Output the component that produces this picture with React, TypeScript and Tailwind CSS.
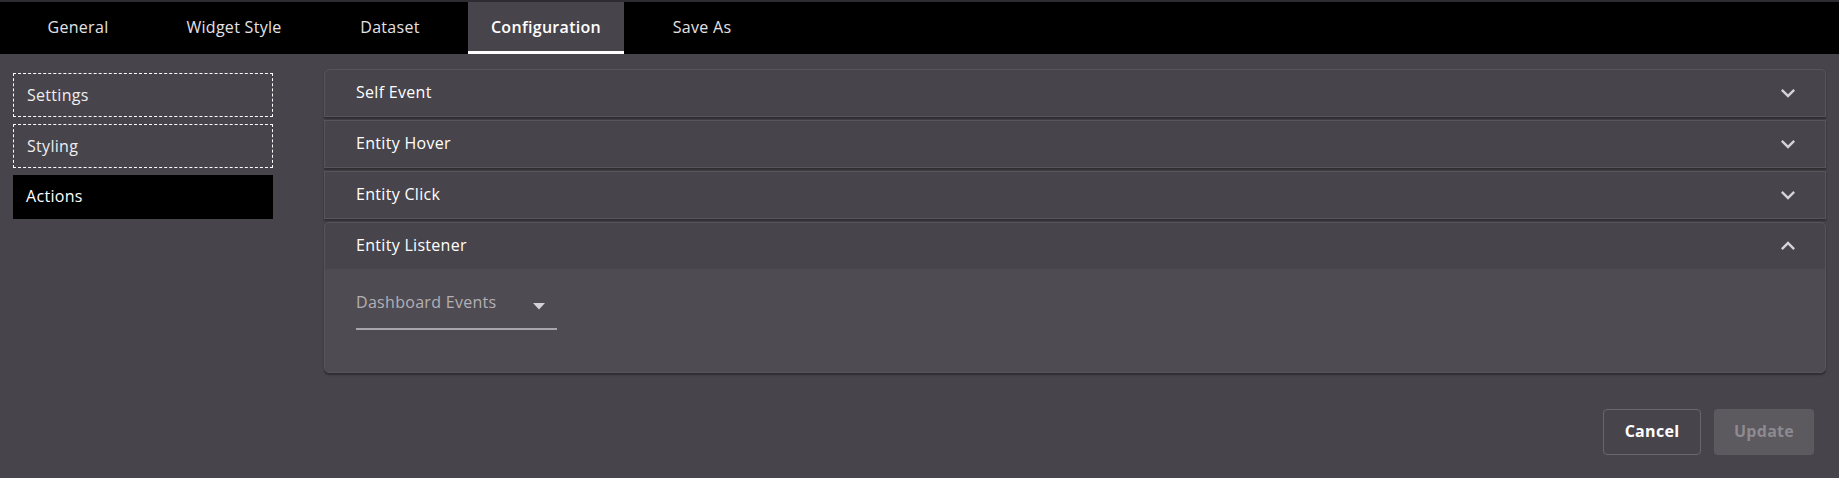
import { useState } from 'react'

const tabs = ['General', 'Widget Style', 'Dataset', 'Configuration', 'Save As']
const sideItems = ['Settings', 'Styling', 'Actions']
const panels = ['Self Event', 'Entity Hover', 'Entity Click', 'Entity Listener']

const Chevron = ({ up }: { up?: boolean }) => (
  <svg width="28" height="28" viewBox="0 0 24 24" className={up ? 'rotate-180' : ''}>
    <path d="M16.59 8.59 12 13.17 7.41 8.59 6 10l6 6 6-6z" fill="#d4d2d6" />
  </svg>
)

const App = () => {
  const [activeTab] = useState('Configuration')
  const [activeSide] = useState('Actions')
  const [open] = useState('Entity Listener')

  return <div className="w-[1839px] h-[478px] bg-[#48444b] font-['Open_Sans',sans-serif] tracking-[0.3px] overflow-hidden">
    {/* tab bar */}
    <div className="border-t-2 border-[#2e2c30] bg-black h-[54px] flex">
      {tabs.map((tab) => (
        <div
          key={tab}
          className={tab === activeTab
            ? 'w-[156px] flex items-center justify-center pt-[1px] bg-[#48444b] border-b-[3px] border-white text-white font-semibold text-[16px]'
            : 'w-[156px] flex items-center justify-center pb-[3px] text-[#e4e2e6] text-[16px]'}>
          {tab}
        </div>
      ))}
    </div>

    <div className="flex">
      {/* side menu */}
      <div className="w-[324px] pl-[13px] pt-[19px] flex flex-col gap-[7px]">
        {sideItems.map((item) => (
          <div
            key={item}
            className={item === activeSide
              ? 'w-[260px] h-[44px] flex items-center px-[13px] pb-[2px] bg-black text-white text-[16px]'
              : 'w-[260px] h-[44px] flex items-center px-[13px] pb-[1px] border border-dashed border-white text-[#eeeeee] text-[16px]'}>
            {item}
          </div>
        ))}
      </div>

      {/* accordion + actions */}
      <div className="flex-1 pr-[13px] pt-[15px]">
        <div className="flex flex-col gap-[3px]">
          {panels.map((panel, i) => (
            <div
              key={panel}
              className={`border border-[#58545b] bg-[#48444b] shadow-[0_2px_2px_rgba(0,0,0,0.35)] ${i === 0 ? 'rounded-t-[5px]' : ''} ${i === panels.length - 1 ? 'rounded-b-[5px] rounded-t-[5px] overflow-hidden' : ''}`}>
              <div className="h-[46px] flex items-center justify-between pl-[31px] pr-[23px]">
                <span className="text-white text-[16px] pb-[2px]">{panel}</span>
                <Chevron up={panel === open} />
              </div>
              {panel === open && (
                <div className="bg-[#4f4b52] pl-[31px] pt-[28px] pb-[42px]">
                  <div className="w-[201px] h-[33px] border-b-2 border-[#a9a6ab] flex items-start justify-between pr-[12px]">
                    <span className="text-[#b3b0b5] text-[16px] leading-[22px] -mt-[6px]">Dashboard Events</span>
                    <svg width="12" height="7" viewBox="0 0 12 7" className="mt-[6px]">
                      <path d="M0 0h12L6 6.5z" fill="#d4d2d6" />
                    </svg>
                  </div>
                </div>
              )}
            </div>
          ))}
        </div>

        <div className="flex justify-end gap-[13px] pt-[36px] pr-[12px]">
          <button className="w-[98px] h-[46px] pb-[3px] rounded-[4px] border border-[#6a666d] text-white font-bold text-[16px]">
            Cancel
          </button>
          <button disabled className="w-[100px] h-[46px] pb-[3px] rounded-[4px] bg-[#5c595f] text-[#8d8a90] font-bold text-[16px]">
            Update
          </button>
        </div>
      </div>
    </div>
  </div>
}

export default App
